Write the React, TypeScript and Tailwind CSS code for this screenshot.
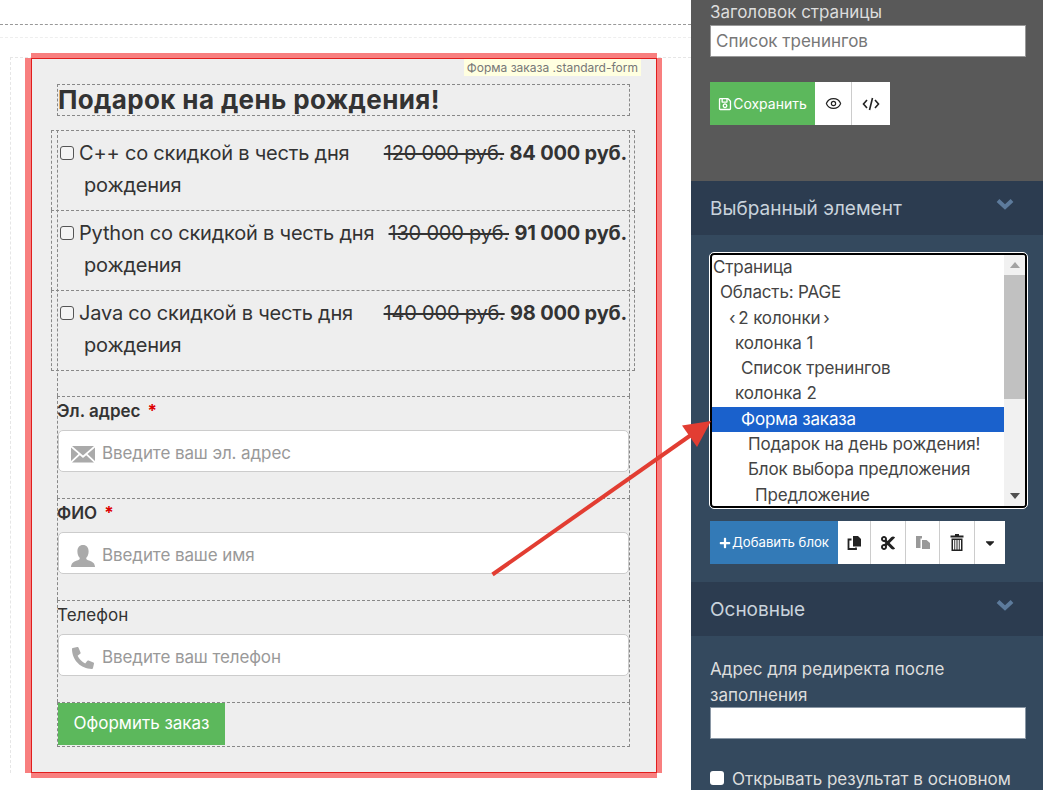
import { FaPhoneAlt, FaRegSave, FaCut, FaCaretDown, FaPlus } from "react-icons/fa";
import { Eye } from "lucide-react";

function Offer({ name, old, price, last }: { name: string; old: string; price: string; last?: boolean }) {
  return (
    <div className={`h-[80px] -ml-[7px] -mr-[6px] border-t border-l border-r border-dashed border-[#888] box-border ${last ? "border-b h-[81px]" : ""}`}>
      <div className="ml-[7px] pr-[7px] h-full pt-[6px] flex justify-between text-[20px] leading-[32px] text-[#333] tracking-[-0.2px]">
        <div className="pl-[25px] indent-[-24px] whitespace-nowrap">
          <input type="checkbox" className="appearance-none w-[14px] h-[14px] border border-[#555] rounded-[3px] mr-[5px] align-[0px] bg-[#f4f4f4]" />
          {name}
          <br />
          рождения
        </div>
        <div className="whitespace-nowrap">
          <s>{old}</s> <b className="font-bold">{price}</b>
        </div>
      </div>
    </div>
  );
}

function EnvelopeIcon() {
  return (
    <svg width="24" height="22" viewBox="0 0 24 22" className="shrink-0">
      <path d="M1 3h22L12 12.500z" fill="#aaa" />
      <path d="M0 4.500 7.500 11 0 18zM24 4.500 16.500 11 24 18z" fill="#aaa" />
      <path d="M8.800 12.200 12 15l3.200-2.800L23 19.500H1z" fill="#aaa" />
    </svg>
  );
}

function UserIcon() {
  return (
    <svg width="24" height="24" viewBox="0 0 24 24" className="shrink-0">
      <path d="M12 1c3.600 0 5.600 2.600 5.600 6.400 0 2.700-1 5-2.300 6.300v1.400c0 1 5 1.900 7.200 3.800.9.800 1.500 3 1.500 4.100H0c0-1.100.6-3.300 1.500-4.100 2.200-1.900 7.200-2.800 7.200-3.800v-1.400C7.400 12.400 6.400 10.100 6.400 7.400 6.400 3.600 8.400 1 12 1z" fill="#aaa" />
    </svg>
  );
}

function CopyIcon() {
  return (
    <svg width="15" height="15" viewBox="0 0 15 15">
      <path d="M6 1h5l3 3v7.500H6z" fill="#222" />
      <path d="M4.500 4.500H1.500v9.500h7.500v-1.500" fill="none" stroke="#222" strokeWidth="1.800" />
    </svg>
  );
}

function PasteIcon() {
  return (
    <svg width="16" height="15" viewBox="0 0 16 15">
      <path d="M1 1h6v2.500h-1.500V13H1z" fill="#999" />
      <path d="M7 5h4.500L15 8v6H7z" fill="#999" />
    </svg>
  );
}

function TrashIcon() {
  return (
    <svg width="14" height="17" viewBox="0 0 14 17" fill="#222">
      <path d="M5 0h4v1.500h4.500V3.500H.5V1.500H5z" />
      <path d="M1.500 4.500h11V17h-11zM3 6v9.500h1.300V6zM5.200 6v9.500h1.300V6zM7.500 6v9.500h1.300V6zM9.700 6v9.500H11V6z" fillRule="evenodd" />
    </svg>
  );
}

function Chevron() {
  return (
    <svg width="18" height="12" viewBox="0 0 18 12" className="-mt-[8px]" fill="none" stroke="#5d7b9c" strokeWidth="4">
      <path d="M2 2.500 9 9l7-6.500" />
    </svg>
  );
}

function Field({ label, req, placeholder, icon }: { label: string; req?: boolean; placeholder: string; icon: React.ReactNode }) {
  return (
    <div className="h-[102px] border-t border-l border-r border-dashed border-[#888] box-border">
      <div className={`h-[28px] -ml-px leading-[28px] text-[17px] text-[#333] ${req ? "font-semibold" : ""}`}>
        {label}
        {req && <span className="text-[#d00] font-bold ml-[7px]">*</span>}
      </div>
      <div className="mt-[5px] h-[42px] bg-white border border-[#ccc] rounded-[5px] flex items-center pl-[12px] pt-[5px] gap-[7px] text-[17px] text-[#999] tracking-[-0.1px]">
        {icon}
        <span>{placeholder}</span>
      </div>
    </div>
  );
}

const rows = [
  { t: "Страница", c: "pl-[1px]" },
  { t: "Область: PAGE", c: "pl-[8px]" },
  { t: "‹\u20092 колонки\u2009›", c: "pl-[17px]" },
  { t: "колонка 1", c: "pl-[23px]" },
  { t: "Список тренингов", c: "pl-[29px]" },
  { t: "колонка 2", c: "pl-[23px]" },
  { t: "Форма заказа", c: "pl-[29px] bg-[#1a61cc] text-white" },
  { t: "Подарок на день рождения!", c: "pl-[36px]" },
  { t: "Блок выбора предложения", c: "pl-[36px]" },
  { t: "Предложение", c: "pl-[43px]" },
];

function ToolButton({ children, w, last }: { children: React.ReactNode; w: string; last?: boolean }) {
  return (
    <div className={`${w} h-full bg-white flex items-center justify-center text-[#222] ${last ? "" : "border-r border-[#ccc]"}`}>{children}</div>
  );
}

function SectionHeader({ title }: { title: string }) {
  return (
    <div className="h-[54px] shrink-0 bg-[#2c3c50] flex items-center justify-between pl-[19px] pr-[29px] text-[19px] text-[#c9d3dc]">
      <span className="pt-[3px]">{title}</span>
      <Chevron />
    </div>
  );
}

export default function App() {
  return (
    <div className="relative flex h-[790px] w-[1043px] overflow-hidden bg-white font-[Inter,sans-serif]">
      <div className="w-[691px] shrink-0">
        <div className="h-[25px] border-b border-dashed border-[#999]" />
        <div className="h-[13px] border-b border-dashed border-[#eee]" />
        <div className="mt-[19px] ml-[10px] border-l border-t border-dashed border-[#e6e6e6] pl-[20px]">
          <div className="w-[626px] h-[715px] bg-[#eee] border border-[#e11d1d] pl-[25px] pr-[26px] pt-[25px] relative shadow-[-6px_0_0_#f87f7f,5px_0_0_#f87f7f,0_-5px_0_#f87f7f,0_5px_0_#f87f7f]">
            <div className="absolute right-[15px] top-0 h-[17px] px-[3px] leading-[17px] bg-[#ffffe0] text-[12px] text-[#777]">
              Форма заказа .standard-form
            </div>
            <div className="h-[32px] border border-dashed border-[#888] leading-[29px] text-[26px] font-bold text-[#333] whitespace-nowrap tracking-[0.36px]">
              Подарок на день рождения!
            </div>
            <div className="mt-[14px] h-[266px] border-l border-r border-dashed border-[#888]">
              <Offer name="C++ со скидкой в честь дня" old="120 000 руб." price="84 000 руб." />
              <Offer name="Python со скидкой в честь дня" old="130 000 руб." price="91 000 руб." />
              <Offer name="Java со скидкой в честь дня" old="140 000 руб." price="98 000 руб." last />
            </div>
            <Field label="Эл. адрес" req placeholder="Введите ваш эл. адрес" icon={<EnvelopeIcon />} />
            <Field label="ФИО" req placeholder="Введите ваше имя" icon={<UserIcon />} />
            <Field label="Телефон" placeholder="Введите ваш телефон" icon={<FaPhoneAlt className="w-[24px] h-[22px] text-[#aaa] shrink-0" />} />
            <div className="h-[45px] border border-dashed border-[#888]">
              <button className="w-[167px] h-[42px] bg-[#5cb85c] text-white text-[17px]">Оформить заказ</button>
            </div>
          </div>
        </div>
      </div>

      <div className="w-[352px] shrink-0 bg-[#34495e] flex flex-col">
        <div className="h-[181px] shrink-0 bg-[#595959] pl-[19px] pr-[17px]">
          <div className="h-[25px] leading-[24px] text-[17px] text-[#ddd]">Заголовок страницы</div>
          <div className="h-[32px] bg-white border border-[#999] pl-[5px] leading-[30px] text-[17px] text-[#777]">Список тренингов</div>
          <div className="mt-[25px] flex h-[43px] items-stretch">
            <div className="w-[105px] bg-[#5cb85c] text-white text-[14px] flex items-center justify-center gap-[1px]">
              <FaRegSave className="text-[14px]" />
              Сохранить
            </div>
            <ToolButton w="w-[37px]"><Eye size={17} strokeWidth={1.7} /></ToolButton>
            <div className="w-[38px] bg-white flex items-center justify-center">
              <svg width="18" height="14" viewBox="0 0 18 14" fill="none" stroke="#222" strokeWidth="1.600"><path d="M5 3 1.500 7 5 11M13 3l3.500 4L13 11M10.500 1 7.500 13" /></svg>
            </div>
          </div>
        </div>
        <SectionHeader title="Выбранный элемент" />
        <div className="h-[347px] shrink-0 pl-[19px] pr-[16px] pt-[18px]">
          <div className="h-[255px] bg-white border-2 border-black rounded-[4px] outline outline-1 outline-white flex overflow-hidden text-[17px] text-[#444] tracking-[-0.15px]">
            <div className="w-[292px]">
              {rows.map((r) => (
                <div key={r.t} className={`h-[25.300px] leading-[25.300px] whitespace-nowrap ${r.c}`}>{r.t}</div>
              ))}
            </div>
            <div className="w-[21px] bg-[#f1f1f1] flex flex-col items-center">
              <div className="h-[20px] flex items-center justify-center">
                <div className="w-0 h-0 border-l-[5px] border-r-[5px] border-b-[6px] border-l-transparent border-r-transparent border-b-[#a3a3a3]" />
              </div>
              <div className="w-full h-[124px] bg-[#c1c1c1]" />
              <div className="flex-1 flex items-end pb-[7px]">
                <div className="w-0 h-0 border-l-[5px] border-r-[5px] border-t-[6px] border-l-transparent border-r-transparent border-t-[#505050]" />
              </div>
            </div>
          </div>
          <div className="mt-[13px] h-[43px] flex items-stretch">
            <div className="w-[128px] bg-[#337ab7] text-white text-[13.200px] flex items-center justify-center gap-[1px]">
              <FaPlus className="text-[12px]" />
              Добавить блок
            </div>
            <ToolButton w="w-[33px]"><CopyIcon /></ToolButton>
            <ToolButton w="w-[35px]"><FaCut className="text-[16px]" /></ToolButton>
            <ToolButton w="w-[34px]"><PasteIcon /></ToolButton>
            <ToolButton w="w-[35px]"><TrashIcon /></ToolButton>
            <ToolButton w="w-[30px]" last><FaCaretDown className="text-[14px]" /></ToolButton>
          </div>
        </div>
        <SectionHeader title="Основные" />
        <div className="pl-[19px] pr-[17px] pt-[20px] text-[17px] text-[#ddd] leading-[26px]">
          <div className="whitespace-nowrap -mb-px">Адрес для редиректа после<br />заполнения</div>
          <div className="h-[32px] bg-white border border-[#8a97a5]" />
          <div className="mt-[27px] flex items-center gap-[8px] whitespace-nowrap">
            <div className="w-[14px] h-[14px] bg-white rounded-[3px] -mt-[2px] shrink-0" />
            Открывать результат в основном
          </div>
        </div>
      </div>

      <svg className="absolute left-0 top-0 pointer-events-none" width="1043" height="790" viewBox="0 0 1043 790">
        <path d="M492.500 574.500 691 435" stroke="#e23d32" strokeWidth="4" fill="none" />
        <path d="M711 421 682 425.500 697 447z" fill="#e23d32" />
      </svg>
    </div>
  );
}
